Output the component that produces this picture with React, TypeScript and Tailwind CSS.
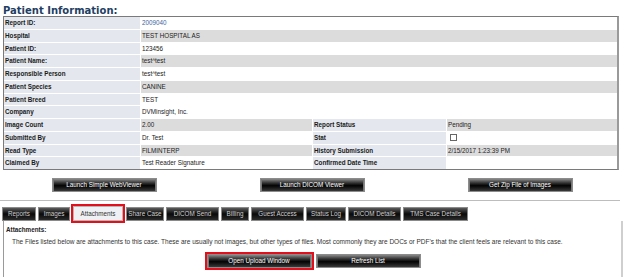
import React from "react";

type Row = {
	label: string;
	value?: React.ReactNode;
	label2?: string;
	value2?: React.ReactNode;
	shaded: boolean;
};

const rows: Row[] = [
	{ label: "Report ID:", value: <span className="text-[#3c64a0]">2009040</span>, shaded: false },
	{ label: "Hospital", value: "TEST HOSPITAL AS", shaded: true },
	{ label: "Patient ID:", value: "123456", shaded: false },
	{ label: "Patient Name:", value: "test^test", shaded: true },
	{ label: "Responsible Person", value: "test^test", shaded: false },
	{ label: "Patient Species", value: "CANINE", shaded: true },
	{ label: "Patient Breed", value: "TEST", shaded: false },
	{ label: "Company", value: "DVMinsight, Inc.", shaded: false },
	{ label: "Image Count", value: "2.00", label2: "Report Status", value2: "Pending", shaded: true },
	{
		label: "Submitted By",
		value: "Dr. Test",
		label2: "Stat",
		value2: <span className="ml-[2px] block h-[7px] w-[7px] border border-[#666] bg-white" />,
		shaded: false,
	},
	{ label: "Read Type", value: "FILMINTERP", label2: "History Submission", value2: "2/15/2017 1:23:39 PM", shaded: true },
	{ label: "Claimed By", value: "Test Reader Signature", label2: "Confirmed Date Time", value2: "", shaded: false },
];

const tabs = [
	{ name: "Reports", w: "w-[34px]" },
	{ name: "Images", w: "w-[32px]" },
	{ name: "Attachments", w: "w-[50px]", active: true },
	{ name: "Share Case", w: "w-[38px]" },
	{ name: "DICOM Send", w: "w-[53px]" },
	{ name: "Billing", w: "w-[28px]" },
	{ name: "Guest Access", w: "w-[53px]" },
	{ name: "Status Log", w: "w-[40px]" },
	{ name: "DICOM Details", w: "w-[53px]" },
	{ name: "TMS Case Details", w: "w-[65px]" },
];

const GlossButton = ({ children, marked }: { children: React.ReactNode; marked?: boolean }) => (
	<button
		className={
			"flex h-[14px] w-[105px] items-center justify-center border border-[#8c8c8c] bg-linear-to-b from-[#8a8a8a] via-[#050505] via-55% to-[#3a3a3a] text-[6.3px] text-white shadow-[inset_1px_0_0_#777,inset_-1px_0_0_#777] " +
			(marked ? "outline-2 outline-[#e3101c]" : "")
		}
	>
		{children}
	</button>
);

const cell = "flex h-[11.75px] items-center pl-[1px] whitespace-nowrap";

export default function App() {
	return (
		<div className="h-[277px] w-[624px] overflow-hidden bg-white font-['Liberation_Sans',Arial,sans-serif] text-[6.3px] text-[#222]">
			<h1 className="h-[16px] pl-[3px] pt-[6px] font-['DejaVu_Sans',sans-serif] text-[10px] leading-[10px] font-bold text-[#233e63]">
				Patient Information:
			</h1>

			<div className="ml-[3px] w-[616px] border border-r-2 border-[#7a7a7a] border-r-[#9a9a9a] bg-white">
				<div className="grid grid-cols-[136px_171px_133px_170px] gap-[1px]">
					{rows.map((row) => {
						const valueBg = row.shaded ? "bg-[#dcdcdc]" : "bg-white";
						return (
							<React.Fragment key={row.label}>
								<div className={cell + " bg-[#e4e8ee] font-bold text-[#1a1a1a]"}>{row.label}</div>
								{row.label2 === undefined ? (
									<div className={cell + " col-span-3 " + valueBg}>{row.value}</div>
								) : (
									<>
										<div className={cell + " " + valueBg}>{row.value}</div>
										<div className={cell + " bg-[#e4e8ee] font-bold text-[#1a1a1a]"}>{row.label2}</div>
										<div className={cell + " " + valueBg}>{row.value2}</div>
									</>
								)}
							</React.Fragment>
						);
					})}
				</div>
			</div>

			<div className="mt-[8px] grid grid-cols-3 justify-items-center">
				<GlossButton>Launch Simple WebViewer</GlossButton>
				<GlossButton>Launch DICOM Viewer</GlossButton>
				<GlossButton>Get Zip File of Images</GlossButton>
			</div>

			<div className="mt-[8px] h-[1px] w-[620px] bg-[#bdbdbd]" />

			<div className="mt-[5px] flex h-[15px] items-end gap-[2px] pl-[2px]">
				{tabs.map((tab) =>
					tab.active ? (
						<div
							key={tab.name}
							className={
								tab.w +
								" mx-[1px] flex h-[15px] items-center justify-center border border-[#b5b5b5] bg-[#eef0f3] text-[#333] outline-2 outline-[#e3101c]"
							}
						>
							{tab.name}
						</div>
					) : (
						<div
							key={tab.name}
							className={
								tab.w +
								" flex h-[14px] items-center justify-center border border-[#8a8a8a] bg-linear-to-b from-[#5c5c5c] via-[#0a0a0a] via-50% to-[#2c2c2c] text-[#cfcfcf]"
							}
						>
							{tab.name}
						</div>
					)
				)}
			</div>

			<div className="ml-[3px] h-[60px] w-[620px] border-l border-r-2 border-l-[#9a9a9a] border-r-[#cfcfcf] pl-[2px] pt-[5px]">
				<div className="leading-[8px] font-bold">Attachments:</div>
				<p className="mt-[4px] pl-[6px] text-[6.5px] leading-[8px] text-[#333]">
					The Files listed below are attachments to this case. These are usually not images, but other types of
					files. Most commonly they are DOCs or PDF&apos;s that the client feels are relevant to this case.
				</p>
				<div className="mt-[8px] flex justify-center gap-[4px]">
					<GlossButton marked>Open Upload Window</GlossButton>
					<GlossButton>Refresh List</GlossButton>
				</div>
			</div>
		</div>
	);
}
